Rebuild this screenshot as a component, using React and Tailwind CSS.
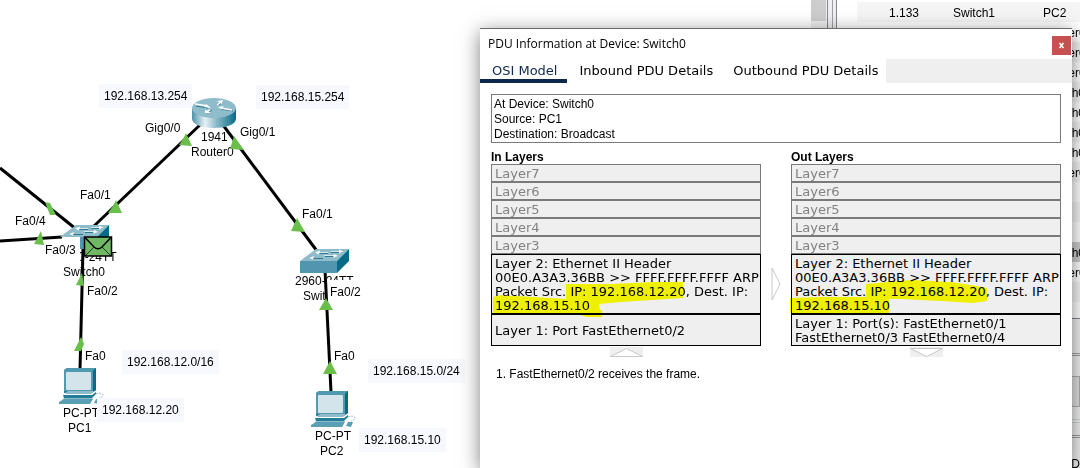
import React from "react";

const links = [
  [0, 168, 76, 229],
  [0, 241, 62, 237],
  [202, 123, 94, 226],
  [223, 125, 317, 251],
  [83, 248, 80, 370],
  [325, 270, 331, 392],
];

const linkLights = [
  "M45 202 L50 203 L56 215 L50 215 Z",
  "M41 231 L44 245 L34 244 Z",
  "M116 200 L122 213 L108 213 L113 206 Z",
  "M186 133 L192 146 L179 145 L183 139 Z",
  "M234 136 L244 150 L230 149 Z",
  "M297 218 L305 232 L291 231 Z",
  "M82 273 L84 286 L76 285 Z",
  "M81 337 L84 344 L81 351 L74 351 Z",
  "M326 298 L333 310 L319 310 Z",
  "M330 361 L337 374 L323 374 Z",
];

const deviceNames = [
  ["1941", "left-[201px] top-[129px]"],
  ["Router0", "left-[191px] top-[144px]"],
  ["2960-24TT", "left-[58px] top-[249px]"],
  ["Switch0", "left-[63px] top-[264px]"],
  ["2960-24TT", "left-[295px] top-[273px]"],
  ["Switch1", "left-[303px] top-[288px]"],
  ["PC-PT", "left-[63px] top-[405px]"],
  ["PC1", "left-[68px] top-[420px]"],
  ["PC-PT", "left-[315px] top-[428px]"],
  ["PC2", "left-[320px] top-[443px]"],
];

const portNames = [
  ["Gig0/0", "left-[145px] top-[120px]"],
  ["Gig0/1", "left-[240px] top-[124px]"],
  ["Fa0/1", "left-[80px] top-[187px]"],
  ["Fa0/4", "left-[15px] top-[213px]"],
  ["Fa0/2", "left-[87px] top-[283px]"],
  ["Fa0", "left-[85px] top-[348px]"],
  ["Fa0/1", "left-[302px] top-[206px]"],
  ["Fa0", "left-[334px] top-[348px]"],
];

const coveringPortNames = [
  ["Fa0/3", "left-[45px] top-[242px] pb-2 pr-1"],
  ["Fa0/2", "left-[327px] top-[280px] pl-[3px] pt-1 pr-2"],
];

const notes = [
  ["192.168.13.254", "left-[99px] top-[84px]"],
  ["192.168.15.254", "left-[256px] top-[85px]"],
  ["192.168.12.0/16", "left-[122px] top-[350px]"],
  ["192.168.12.20", "left-[97px] top-[398px]"],
  ["192.168.15.0/24", "left-[368px] top-[359px]"],
  ["192.168.15.10", "left-[359px] top-[428px]"],
];

function Labels({ items, tone = "" }) {
  return items.map(([text, place]) => (
    <span key={place} className={`absolute whitespace-nowrap ${tone} ${place}`}>{text}</span>
  ));
}

function SwitchIcon({ x, y }) {
  return (
    <g transform={`translate(${x} ${y})`}>
      <path d="M0 12 L16 0 H49 L37 12 Z" fill="#8fbccb" />
      <path d="M0 12 H37 V24 H0 Z" fill="#5196ae" />
      <path d="M37 12 L49 0 V12 L37 24 Z" fill="#066b86" />
      <g stroke="#32788f" strokeWidth="1" fill="none">
        <path d="M18 4.5 H28 M31 3.5 H42 M12 9.5 H23 M25 7.5 H36" />
      </g>
      <g stroke="#d9e9ee" strokeWidth="1" fill="none">
        <path d="M18 3.5 H28 M31 2.5 H41 M24 6.5 H35" />
      </g>
      <g fill="#fff">
        <path d="M20 1.5 L15 3.5 L19 5.5 Z M39 0.8 L43.5 2.6 L39 4.4 Z M14 7 L9.5 9 L13 10.6 Z M34 5 L38 7 L33 8.8 Z" />
      </g>
    </g>
  );
}

function PcIcon({ x, y }) {
  return (
    <g transform={`translate(${x} ${y})`}>
      <path d="M5 2 L8 0 H37 V22 L33 25 H5 Z" fill="#247d97" />
      <path d="M5 2 L8 0 H37 L34 3 H5 Z" fill="#4f9ab0" />
      <path d="M34 3 L37 0 V22 L34 24 Z" fill="#066b86" />
      <rect x="5" y="3" width="29" height="20" fill="#539aaf" />
      <rect x="7" y="4" width="25" height="18" rx="1" fill="#d3e4ea" />
      <path d="M6 25 L9 23 H35 L32 26 H7 Z" fill="#8fbccb" />
      <path d="M4 27 H33 L37 24 V26 L33 30 H5 Z" fill="#247d97" />
      <path d="M5 30 H34 L30 36 H0 Z" fill="#8fbccb" />
      <path d="M0 34 L5 31 H34 L31 36 H0 Z" fill="#5b9fb4" />
      <path d="M37 31 L42 31 L40 36 L35 35 Z" fill="#5b9fb4" />
      <path d="M37 26 Q43 24 44 27 Q43 30 40 30" fill="none" stroke="#8fbccb" strokeDasharray="2 1" />
    </g>
  );
}

function Topology() {
  return (
    <section aria-label="Network topology" className="relative min-w-0 flex-1 overflow-hidden bg-white leading-4">
      <Labels items={deviceNames} />
      <Labels items={coveringPortNames} tone="bg-white" />
      <svg className="absolute left-0 top-0" width="480" height="468" viewBox="0 0 480 468" aria-hidden="true">
        <defs>
          <linearGradient id="routerSide">
            <stop offset="0" stopColor="#4e94aa" />
            <stop offset="0.3" stopColor="#e6f1f4" />
            <stop offset="0.55" stopColor="#8dbac9" />
            <stop offset="1" stopColor="#066b86" />
          </linearGradient>
        </defs>
        {links.map(([x1, y1, x2, y2], i) => (
          <line key={i} x1={x1} y1={y1} x2={x2} y2={y2} stroke="#000" strokeWidth="3" />
        ))}
        <path d="M192 108 V119 C193 131 235 131 236 119 V108 Z" fill="url(#routerSide)" />
        <ellipse cx="214" cy="108" rx="22" ry="10" fill="#8fbccb" />
        <g stroke="#32788f" strokeWidth="1" fill="none">
          <path d="M196 106 L208 108 M219 105 L223 102 M221 109 L233 111 M207 113 L212 110" />
        </g>
        <g stroke="#fff" strokeWidth="1.5" fill="none">
          <path d="M195 104 L208 106 M217 105 L221 102 M221 108 L232 110 M206 112 L210 110" />
        </g>
        <path d="M206 104 L211 108 L204 107 Z M217 101 L223 100 L222 104 Z M218 107 L224 106 L221 109 Z M205 110 L211 113 L205 113 Z" fill="#fff" />
        <path d="M60 237 L76 225 H109 L97 237 Z" fill="#8fbccb" />
        <path d="M97 237 L109 225 V237 Z" fill="#066b86" />
        <path d="M80 237 H86 V249 H80 Z" fill="#5196ae" />
        <g stroke="#32788f" fill="none">
          <path d="M78 229.5 H88 M91 228.5 H102 M72 234.5 H83 M85 232.5 H96" />
        </g>
        <g stroke="#d9e9ee" fill="none">
          <path d="M78 228.5 H88 M91 227.5 H101 M84 231.5 H95" />
        </g>
        <path d="M80 226.5 L75 228.5 L79 230.5 Z M99 225.8 L103.5 227.6 L99 229.4 Z M74 232 L69.5 234 L73 235.6 Z M94 230 L98 232 L93 233.8 Z" fill="#fff" />
        <SwitchIcon x={300} y={249} />
        <PcIcon x={59} y={368} />
        <PcIcon x={311} y={391} />
        {linkLights.map((d, i) => (
          <path key={i} d={d} fill="#6abf4b" />
        ))}
        <g stroke="#000" fill="none">
          <rect x="84.5" y="237" width="27" height="19" fill="#71b865" strokeWidth="1.5" />
          <path d="M85 237.5 L94 247 Q98 250.5 102 247 L111 237.5" strokeWidth="1.5" />
          <path d="M85 256 L94 247 M111 256 L102 247" strokeWidth="0.7" />
        </g>
      </svg>
      <Labels items={portNames} />
      <Labels items={notes} tone="bg-[#f7f8fe] px-[5px] py-1" />
    </section>
  );
}

const events = [
  ["1.133", "Switch1", "PC2", "bg-[#f5f5f5]"],
  ["1.133", "Switch1", "Router0", "bg-white"],
  ["", "", "Router0", "bg-[#f5f5f5]"],
  ["", "", "Router0", "bg-white"],
  ["", "", "Switch0", "bg-[#f5f5f5]"],
  ["", "", "Switch0", "bg-white"],
  ["", "", "Switch0", "bg-[#f5f5f5]"],
  ["", "", "Switch0", "bg-white"],
  ["", "", "Router0", "bg-[#f5f5f5]"],
  ["", "", "", "bg-white"],
  ["", "", "", "bg-[#f5f5f5]"],
  ["", "", "", "bg-white"],
  ["", "", "Switch0", "bg-[#cdcdcd]"],
  ["", "", "Router0", "bg-white"],
  ["", "", "", "bg-[#f5f5f5]"],
  ["", "", "", "bg-white"],
];

function EventPanel() {
  return (
    <aside aria-label="Event list" className="flex w-[243px] shrink-0 flex-col overflow-hidden bg-[#f0f0f0]">
      <div className="h-[319px] shrink-0 overflow-hidden border-b border-[#828790] bg-white pl-5 pt-[2px]">
        <table className="w-[260px] table-fixed border-collapse">
          <tbody>
            {events.map(([time, last, at, tone], i) => (
              <tr key={i} className={`h-5 ${tone}`}>
                <td className="w-[96px] p-0 pl-8 pt-[2px]">{time}</td>
                <td className="w-[90px] p-0 pt-[2px]">{last}</td>
                <td className="p-0 pt-[2px]">{at}</td>
              </tr>
            ))}
          </tbody>
        </table>
      </div>
      <div className="h-[35px] shrink-0 border-b border-[#9a9a9a]" />
      <div className="h-[2px] shrink-0 border-b border-[#9a9a9a]" />
      <div className="mt-5 h-[31px] shrink-0 border border-[#adadad] bg-[#e1e1e1]" />
      <div className="mt-3 h-1 shrink-0 border-y border-[#d0d8d8]" />
      <div className="mt-3 h-[3px] shrink-0 border-y border-[#9a9a9a]" />
      <div className="mt-[18px] shrink-0 text-right">D</div>
    </aside>
  );
}

const upperLayers = ["Layer7", "Layer6", "Layer5", "Layer4", "Layer3"];

function LayerColumn({ title, portText, mark, chevron, chevronLabel }) {
  return (
    <section className="flex min-w-0 flex-1 flex-col">
      <h2 className="h-[15px] font-bold leading-4">{title}</h2>
      <div className="flex flex-col font-['DejaVu_Sans',sans-serif] text-[13px] leading-[14px]">
        {upperLayers.map((name) => (
          <button
            key={name}
            disabled
            className="h-[18px] border border-[#7a7a7a] bg-[#efefef] px-[3px] pt-px text-left leading-4 text-[#828282]"
          >
            {name}
          </button>
        ))}
        <div className="relative">
          <button className="block h-[60px] w-full whitespace-nowrap border border-black bg-[#efefef] px-[3px] pt-[2px] text-left">
            Layer 2: Ethernet II Header
            <br />
            00E0.A3A3.36BB &gt;&gt; FFFF.FFFF.FFFF ARP
            <br />
            Packet Src. IP: 192.168.12.20, Dest. IP:
            <br />
            192.168.15.10
          </button>
          <svg
            className="pointer-events-none absolute left-0 top-0 overflow-visible mix-blend-multiply"
            width="271"
            height="64"
            viewBox="0 0 271 64"
            aria-hidden="true"
          >
            <path d={mark} fill="#ffff00" />
          </svg>
        </div>
        <button className="h-8 border border-black bg-[#efefef] px-[3px] pt-[2px] text-left">{portText}</button>
      </div>
      <button aria-label={chevronLabel} className="mt-px h-[10px] w-[33px] self-center bg-[#efefef]">
        <svg width="33" height="10" viewBox="0 0 33 10" aria-hidden="true">
          <path d={chevron} fill="#fff" stroke="#c8c8c8" />
        </svg>
      </button>
    </section>
  );
}

function PduDialog() {
  return (
    <div
      role="dialog"
      aria-labelledby="pdu-title"
      className="absolute bottom-0 right-2 top-7 flex w-[592px] flex-col border-t border-[#6b6b6b] bg-white shadow-[0_4px_18px_rgba(0,0,0,0.5)]"
    >
      <header className="flex h-[30px] shrink-0 items-center justify-between pl-2">
        <h1 id="pdu-title" className="font-['Open_Sans','Noto_Sans',sans-serif] text-xs">PDU Information at Device: Switch0</h1>
        <button
          aria-label="Close"
          className="mr-px mt-[3px] flex h-[19px] w-[19px] items-center justify-center bg-[#c75050] text-white"
        >
          <svg width="7" height="7" viewBox="0 0 7 7" aria-hidden="true">
            <path d="M1.5 1 L5.5 6 M5.5 1 L1.5 6" stroke="currentColor" strokeWidth="1.6" />
          </svg>
        </button>
      </header>
      <nav role="tablist" className="flex h-6 shrink-0 bg-[#efefef] font-['DejaVu_Sans',sans-serif] text-[13px] leading-6">
        <button role="tab" aria-selected="true" className="border-b-4 border-[#0d274d] bg-white pl-3 pr-[10px] text-[#0d274d]">
          OSI Model
        </button>
        <button role="tab" aria-selected="false" className="bg-white pl-3 pr-2">Inbound PDU Details</button>
        <button role="tab" aria-selected="false" className="bg-white pl-3 pr-2">Outbound PDU Details</button>
      </nav>
      <div className="flex flex-col px-[11px] pt-[11px]">
        <div className="h-[49px] border border-[#7a7a7a] px-[2px] pt-[2px] leading-[15px]">
          <p>At Device: Switch0</p>
          <p>Source: PC1</p>
          <p>Destination: Broadcast</p>
        </div>
        <div className="mt-[6px] flex">
          <LayerColumn
            title="In Layers"
            portText="Layer 1: Port FastEthernet0/2"
            mark="M75 30 L120 30 L162 28 L192 28 V44 L130 48 L108 50 L109 56 H111 V63 L96 63 L86 60 H2 V43 L10 41 L75 45 Z"
            chevron="M0.5 9.5 L16.5 1.5 L32.5 9.5 Z"
            chevronLabel="Incoming port"
          />
          <button aria-label="Next layer" className="mx-[10px] mt-[118px] h-[34px] w-[10px] shrink-0">
            <svg width="10" height="34" viewBox="0 0 10 34" aria-hidden="true">
              <path d="M1 1 L9 17 L1 33 Z" fill="#fff" stroke="#c8c8c8" />
            </svg>
          </button>
          <LayerColumn
            title="Out Layers"
            portText="Layer 1: Port(s): FastEthernet0/1 FastEthernet0/3 FastEthernet0/4"
            mark="M75 30 L120 26 L160 28 L186 32 L196 34 V47 L182 49 L150 47 L110 45 L98 45 V59 H-1 V44 L30 43 L75 43 Z"
            chevron="M0.5 1.5 L16.5 9.5 L32.5 1.5 Z"
            chevronLabel="Outgoing port"
          />
        </div>
        <p className="mt-[9px] pl-[5px] leading-4">1. FastEthernet0/2 receives the frame.</p>
      </div>
    </div>
  );
}

export default function App() {
  return (
    <main className="relative flex h-screen overflow-hidden bg-white font-['Liberation_Sans',Arial,sans-serif] text-xs text-black">
      <Topology />
      <div className="w-[15px] shrink-0 bg-[#efefef]">
        <div className="h-[21px] bg-[#cdcdcd]" />
      </div>
      <div className="flex w-[11px] shrink-0 justify-between bg-[#f0f0f0] pl-px">
        <div className="w-px bg-[#828790]" />
        <div className="w-px bg-[#a0a0a0]" />
        <div className="w-px bg-[#828790]" />
      </div>
      <EventPanel />
      <PduDialog />
    </main>
  );
}
